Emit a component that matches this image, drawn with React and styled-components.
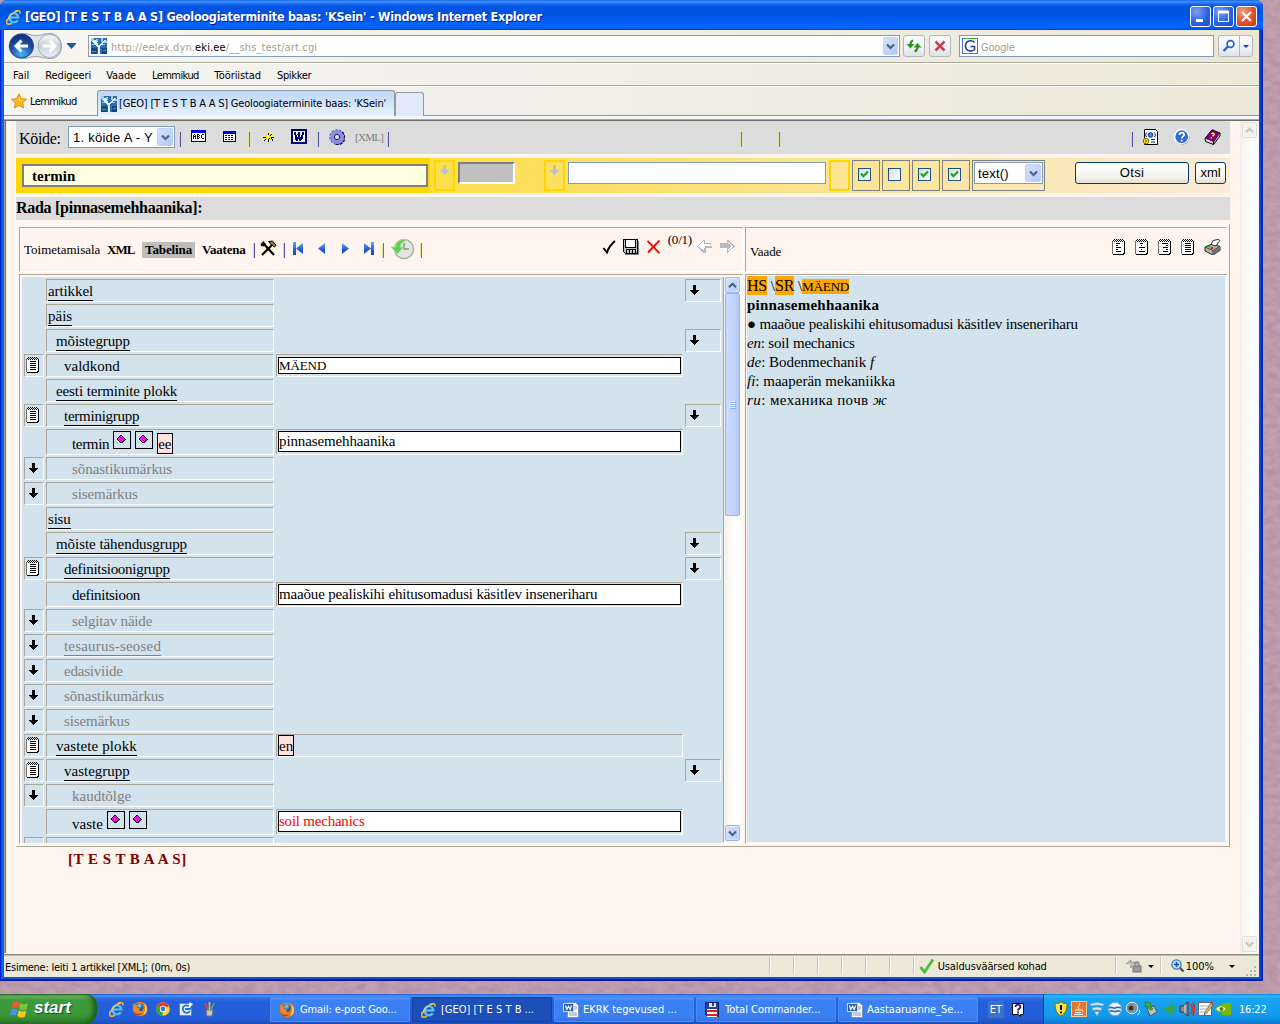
import React from "react";
import styled, { createGlobalStyle, css } from "styled-components";

const UI = '"DejaVu Sans Condensed", "DejaVu Sans", sans-serif';
const SERIF = '"Liberation Serif", serif';
const ARIAL = '"Liberation Sans", sans-serif';

const GlobalStyle = createGlobalStyle`
  * { box-sizing: border-box; }
  html, body { margin: 0; padding: 0; overflow: hidden; }
  svg { display: block; flex: none; }
`;

/* ---------- shared pieces ---------- */

const Desktop = styled.div`
  position: relative;
  width: 1280px;
  height: 1024px;
  overflow: hidden;
  background: #bb96a8;
  display: flex;
  flex-direction: column;
  justify-content: space-between;
`;
const Wallpaper = styled.svg`
  position: absolute;
  inset: 0;
`;
const Text = styled.span`
  white-space: pre;
  flex: none;
  font-size: ${(p) => p.$size || 11}px;
  letter-spacing: ${(p) => p.$ls || 0}px;
  font-weight: ${(p) => (p.$bold ? 700 : 400)};
  color: ${(p) => p.$color || "inherit"};
  margin-left: ${(p) => p.$ml || 0}px;
  margin-top: ${(p) => p.$mt || 0}px;
  text-shadow: ${(p) => p.$shadow || "none"};
`;
const Slot = styled.div`
  flex: none;
  display: flex;
  margin-left: ${(p) => p.$ml || 0}px;
  margin-top: ${(p) => p.$mt || 0}px;
`;
const Spacer = styled.div`
  flex: 1;
`;

function Pixels({ rows, colors }) {
  const w = Math.max(...rows.map((r) => r.length));
  const cells = [];
  rows.forEach((r, y) => {
    let x = 0;
    while (x < r.length) {
      const c = r[x];
      let n = 1;
      while (x + n < r.length && r[x + n] === c) n++;
      if (colors[c]) cells.push(<rect key={`${x}-${y}`} x={x} y={y} width={n} height="1" fill={colors[c]} />);
      x += n;
    }
  });
  return (
    <svg width={w} height={rows.length} shapeRendering="crispEdges">
      {cells}
    </svg>
  );
}

const DOWN = ["...kkk...", "...kkk...", "...kkk...", "...kkk...", "...kkk...", "kkkkkkkkk", ".kkkkkkk.", "..kkkkk..", "...kkk...", "....k...."];
const DownArrow = ({ color = "#000" }) => <Pixels rows={DOWN} colors={{ k: color }} />;

const noteBody = (line) => {
  const rows = ["..k.k.k.k.k..", ".k.k.k.k.k.k.", "gwkwkwkwkwkwk"];
  for (let i = 0; i < 11; i++) {
    rows.push("gww" + (i % 2 === 1 ? line[(i - 1) / 2] : "wwwwwww") + "wwk");
  }
  rows.push("gwwwwwwwwwwkk", ".kkkkkkkkkkk.");
  return rows;
};
const NOTE_LINES = {
  left: ["wkkkkww", "wkkwwww", "wkkkkkw", "wkkwwww", "wkkkkkw"],
  center: ["wwkkkww", "wwwkwww", "wkkkkkk", "wwwkwww", "wkkkkkk"],
  right: ["wkkkkkk", "wwwwwkk", "wwkkkkk", "wwwwwkk", "wwkkkkk"],
  full: ["wkkkkkk", "wkkkkkk", "wkkkkkk", "wkkkkkk", "wkkkkkk"],
};
const Note = ({ kind = "full" }) => <Pixels rows={noteBody(NOTE_LINES[kind])} colors={{ k: "#000", w: "#fff", g: "#707070" }} />;

const Diamond = () => (
  <Pixels
    rows={["...kk....", "..kmmk...", ".kmmmmk..", "kmmmmmmk.", "kmmmmmmmk", ".kmmmmkk.", "..kmmkk..", "...kkk..."]}
    colors={{ k: "#000", m: "#f0f" }}
  />
);

const Sep = styled.i`
  flex: none;
  width: 2px;
  height: 15px;
  margin-left: ${(p) => p.$ml || 0}px;
  margin-top: ${(p) => p.$mt || 0}px;
  background: ${(p) =>
    p.$tone === "gold"
      ? "linear-gradient(90deg, #e8e39a 50%, #7d7a3c 50%)"
      : "linear-gradient(90deg, #d9d5c6 50%, #5454a8 50%)"};
`;

const Chevron = ({ color = "#4d6185", up, size = 9 }) => (
  <svg width={size} height={size - 2} viewBox="0 0 9 7">
    <path d={up ? "M1 5.3 4.5 1.8 8 5.3" : "M1 1.5 4.5 5 8 1.5"} fill="none" stroke={color} strokeWidth="2.2" />
  </svg>
);

/* ---------- brand glyphs ---------- */

const IeLogo = ({ size = 16 }) => (
  <svg width={size} height={size} viewBox="0 0 16 16">
    <path d="M13.4 9.8H5.4c.2 2.600 3.400 3 4.500 1.100h3.200C11.200 16.300 2.400 15.300 2.300 8.800 2.300 1.600 13.300 1.300 13.500 8.600zM5.500 7.300h4.800C10 4.900 6 4.700 5.500 7.300z" fill="#62c0fa" stroke="#1a6cc0" strokeWidth=".5" />
    <path d="M13.800 4.500c.8-2.900-1.400-3.800-4.800-2M1.600 10.200c-2.500 5 .3 6.200 4.400 3.700" fill="none" stroke="#f2b321" strokeWidth="1.700" />
    <path d="M1.600 11C3 7 7 3 11.600 2" fill="none" stroke="#f6cf51" strokeWidth="1.300" />
  </svg>
);
const Firefox = () => (
  <svg width="16" height="16" viewBox="0 0 16 16">
    <circle cx="8" cy="8" r="7.300" fill="#ed7d14" />
    <circle cx="7.500" cy="6.200" r="4.200" fill="#2f5fae" />
    <circle cx="7.500" cy="4.500" r="2.200" fill="#67b7e6" />
    <path d="M.8 2 3.500 4.500l2-.7L5 6.500l3 1c-2 2-.5 3.200 1.500 2.500-2 3-8 2-8-4z" fill="#f08a1c" />
    <path d="M12 2c4.500 4 4 10-1 12 2.500-3.500 2.500-8 1-12z" fill="#ffd04a" />
    <path d="M1 10c2 3 6 4 9 2-1 3-7 4-9-2z" fill="#b8420c" />
  </svg>
);
const Chrome = () => (
  <svg width="16" height="16" viewBox="0 0 16 16">
    <circle cx="8" cy="8" r="6.800" fill="#ffd43a" />
    <path d="M8 8 2.200 4.800A6.800 6.800 0 0 1 14 5z" fill="#e33b2e" />
    <path d="M8 8 2.200 4.500A6.800 6.800 0 0 0 7.500 14.800z" fill="#35a148" />
    <circle cx="8" cy="8" r="3.2" fill="#fff" />
    <circle cx="8" cy="8" r="2.400" fill="#3b78d8" />
  </svg>
);
const WordDoc = () => (
  <svg width="16" height="16" viewBox="0 0 16 16">
    <path d="M4.500.500h8l3 3v12h-11z" fill="#fff" stroke="#7b92b8" />
    <path d="M11 5h3M11 7h3M6 11h8M6 13h8" stroke="#7d99cc" />
    <rect x=".5" y="1.500" width="10" height="8" fill="#2b5cb0" stroke="#c8d8f4" />
    <path d="M2.500 3.500l1.200 4L5.500 4.200 7.200 7.500 8.500 3.500" fill="none" stroke="#fff" strokeWidth="1.200" />
  </svg>
);
const Floppy = ({ red }) => (
  <svg width={red ? 14 : 16} height={red ? 15 : 16} viewBox={red ? "0 0 15 15" : "0 0 16 16"} shapeRendering="crispEdges">
    {!red && <path d="M2 15.500h13.500V2" stroke="#808080" fill="none" />}
    <path d="M.500.500h14v14h-12l-2-2z" fill={red ? "#24429a" : "#c0c0c0"} stroke={red ? "#0b1f5c" : "#000"} />
    {red ? (
      <>
        <rect x="4" y="0" width="8" height="5" fill="#dfe6f5" />
        <rect x="8" y="1" width="2" height="3" fill="#24429a" />
        <rect x="2" y="7" width="11" height="8" fill="#fff" />
        <path d="M2 9.500h11M2 13h11" stroke="#e02020" strokeWidth="2" />
      </>
    ) : (
      <>
        <rect x="2.500" y=".5" width="10" height="8" fill="#fff" stroke="#000" />
        <rect x="3.500" y="10.500" width="9" height="4" fill="#c0c0c0" stroke="#000" />
        <path d="M6.500 11v3M9.500 11v3" stroke="#000" />
      </>
    )}
  </svg>
);
const Tree = () => (
  <svg width="16" height="16" viewBox="0 0 16 16" shapeRendering="crispEdges">
    <rect width="16" height="16" fill="#2e6cae" />
    <path d="M0 0h3v3H0zM5 1h2v3H5zM10 0h2v4h-2zM13 3h3v2h-3zM1 6h5v1H1zM9 6h5v1H9zM3 3h2v3H3z" fill="#9dcbf0" />
    <path d="M2 3 8 9 14 2M8 16V8M4 2l3 6M11 5 9 8" stroke="#e4f4ff" strokeWidth="1.600" fill="none" />
    <path d="M0 10h6v6H0zM11 10h5v6h-5z" fill="#124a86" />
    <path d="M1 13h4M12 12h3" stroke="#4d8fcd" />
  </svg>
);

/* ---------- window chrome ---------- */

const Window = styled.div`
  position: relative;
  width: 1263px;
  height: 981px;
  padding: 0 4px 4px;
  border-radius: 7px 7px 0 0;
  overflow: hidden;
  background: linear-gradient(90deg, #0019cf 0, #0831d9 1px, #166aee 2px, #0855dd 4px, #0855dd 1259px, #0048f0 1260px, #003dda 1261px, #00138c 1263px);
  box-shadow: inset 0 -1px #00138c, inset 0 -2px #001ea0;
  font-family: ${UI};
  font-size: 11px;
  color: #000;
`;
const TitleBar = styled.div`
  height: 30px;
  margin: 0 -4px;
  padding: 3px 6px 0 6px;
  display: flex;
  align-items: center;
  color: #fff;
  background: linear-gradient(#0a4fd8 0, #3c93ff 1px, #2a7df5 3px, #0a5ce8 5px, #0054e3 8px, #0054e3 15px, #005df5 20px, #0066ff 26px, #0060f5 28px, #003dd7 30px);
`;
const Caption = styled.button`
  width: 21px;
  height: 21px;
  padding: 0;
  margin-left: 2px;
  border: 1px solid #fff;
  border-radius: 3px;
  display: grid;
  place-items: center;
  background: ${(p) => (p.$close ? "radial-gradient(circle at 30% 25%, #f0a080, #e0512a 55%, #c03a12)" : "radial-gradient(circle at 30% 25%, #7ba2f8, #2e63e6 55%, #1a4bd0)")};
`;
const AddressBar = styled.div`
  height: 33px;
  padding-left: 4px;
  display: flex;
  align-items: center;
  background: linear-gradient(90deg, #f6f5f1, #f0efe6 60%, #ebe7d4);
  border-bottom: 1px solid #aca899;
`;
const UrlBox = styled.div`
  width: ${(p) => p.$w}px;
  height: 22px;
  margin-left: ${(p) => p.$ml}px;
  padding: 1px 1px 1px 2px;
  border: 1px solid #7f9db9;
  background: #fff;
  display: flex;
  align-items: center;
  color: #a39f90;
`;
const DropButton = styled.div`
  width: ${(p) => p.$w || 15}px;
  align-self: stretch;
  border-radius: 2px;
  display: grid;
  place-items: center;
  background: linear-gradient(135deg, #d6e2fd, #b4c8f6);
  border: 1px solid #c2d2f5;
`;
const ToolButton = styled.div`
  width: ${(p) => p.$w}px;
  height: 22px;
  margin-left: ${(p) => p.$ml}px;
  border: 1px solid #b5b6b8;
  border-radius: ${(p) => p.$r || "3px"};
  background: linear-gradient(#fdfdfd, #eef0f6 60%, #dfe3ee);
  display: grid;
  place-items: center;
`;
const MenuBar = styled.div`
  height: 23px;
  display: flex;
  align-items: center;
  padding: 2px 0 0 9px;
  background: linear-gradient(90deg, #f5f5f2, #efede2 60%, #ece9d8);
  border-top: 1px solid #fff;
  border-bottom: 1px solid #aca899;
`;
const TabBar = styled.div`
  height: 30px;
  display: flex;
  padding-left: 7px;
  border-top: 1px solid #fff;
  border-bottom: 1px solid #8e9aa9;
  background: linear-gradient(90deg, #f5f5f2, #efede2 60%, #ece9d8);
`;
const Favourites = styled.div`
  width: 86px;
  display: flex;
  align-items: center;
`;
const Tab = styled.div`
  width: ${(p) => p.$w}px;
  height: ${(p) => p.$h}px;
  align-self: flex-end;
  margin-right: 0;
  margin-bottom: -1px;
  padding-left: 3px;
  display: flex;
  align-items: center;
  border: 1px solid #919b9c;
  border-bottom: 0;
  border-radius: 3px 3px 0 0;
  background: ${(p) => (p.$blank ? "#e0eafa" : "linear-gradient(#bdd7fb, #eaf2fd)")};
`;
const PageTop = styled.div`
  height: 5px;
  background: linear-gradient(#f3f7fd 3px, #aca899 3px, #aca899 4px, #716f64 4px);
`;

/* ---------- page ---------- */

const Page = styled.div`
  height: 832px;
  display: flex;
  border-left: 1px solid #aca899;
  box-shadow: inset 1px 0 #716f64;
  background: #fff4ee;
  font-family: ${SERIF};
  padding-left: 11px;
  padding-right: 2px;
`;
const PageBody = styled.div`
  width: 1214px;
  display: flex;
  flex-direction: column;
`;
const ScrollBar = styled.div`
  width: ${(p) => p.$w}px;
  margin-left: ${(p) => p.$ml || 0}px;
  display: flex;
  flex-direction: column;
  background: linear-gradient(90deg, #f3f1ec, #fefefb 60%);
  border-left: 1px solid ${(p) => p.$edge || "#eeede5"};
  padding: ${(p) => (p.$edge ? 0 : 1)}px ${(p) => (p.$edge ? 1 : 0)}px 1px 1px;
`;
const ScrollButton = styled.div`
  height: 16px;
  border-radius: 2px;
  display: grid;
  place-items: center;
  border: 1px solid ${(p) => (p.$off ? "#e2e0d6" : "#9db6ee")};
  background: ${(p) => (p.$off ? "#f2f1ea" : "linear-gradient(135deg, #d4e1fe, #b6cbfa)")};
  box-shadow: inset 0 0 0 1px #fff6;
`;
const Thumb = styled.div`
  height: 223px;
  border-radius: 2px;
  border: 1px solid #98b3ea;
  display: grid;
  place-items: center;
  background: linear-gradient(90deg, #cbdafe, #c3d3fd 60%, #b4c8f8);
`;

const TopBar = styled.div`
  height: 33px;
  background: #dcdcdc;
  display: flex;
  align-items: flex-start;
  padding-left: 3px;
`;
const Label = styled.div`
  width: 42px;
  margin-top: 9px;
  font-size: 16px;
  letter-spacing: -0.3px;
  white-space: nowrap;
`;
const Select = styled.div`
  width: ${(p) => p.$w}px;
  height: 22px;
  margin-left: ${(p) => p.$ml || 0}px;
  margin-top: ${(p) => p.$mt || 0}px;
  padding: 1px 1px 1px 4px;
  display: flex;
  align-items: center;
  justify-content: space-between;
  border: 1px solid #7f9db9;
  background: #fff;
  font-family: ${ARIAL};
`;
const SearchBar = styled.div`
  height: 35px;
  margin-top: 4px;
  display: flex;
  padding-top: 2px;
  background: linear-gradient(90deg, #ffd700, #faebd7);
`;
const TermCell = styled.div`
  width: 414px;
  height: 35px;
  margin-top: -2px;
  padding: 6px 2px 0 6px;
  background: #ffd700;
`;
const TermBox = styled.div`
  height: 23px;
  width: 406px;
  border: 2px solid #808080;
  background: #ffffe0;
  display: flex;
  align-items: center;
  padding: 2px 0 0 8px;
`;
const GoldCell = styled.div`
  width: 21px;
  height: 31px;
  margin-left: ${(p) => p.$ml}px;
  border: 2px solid #ffd700;
  display: flex;
  justify-content: center;
  padding-top: 3px;
`;
const GreyButton = styled.div`
  width: 57px;
  height: 22px;
  margin: 2px 0 0 3px;
  background: #c0c0c0;
  border: 2px solid;
  border-color: #808080 #fff #fff #808080;
`;
const SearchInput = styled.div`
  width: 258px;
  height: 22px;
  margin: 2px 0 0 3px;
  background: #fff;
  border: 1px solid #7f9db9;
`;
const CheckCell = styled.div`
  width: ${(p) => p.$w || 28}px;
  height: 31px;
  margin-left: 2px;
  border: 1px solid #808080;
  padding: ${(p) => p.$pad || "7px 0 0 5px"};
`;
const CheckBox = styled.div`
  width: 13px;
  height: 13px;
  border: 1px solid #1c5180;
  background: linear-gradient(135deg, #dcdcd7, #fff);
`;
const PushButton = styled.div`
  width: ${(p) => p.$w}px;
  height: 22px;
  margin: 2px 0 0 ${(p) => p.$ml}px;
  padding-bottom: 2px;
  border: 1px solid #003c74;
  border-radius: 3px;
  background: linear-gradient(#fff, #f3f3ee 70%, #e2dfd2);
  display: flex;
  align-items: center;
  justify-content: center;
  font-family: ${ARIAL};
`;
const PathBar = styled.div`
  height: 23px;
  margin-top: 4px;
  background: #dcdcdc;
  display: flex;
  align-items: center;
`;
const Frame = styled.div`
  width: 1214px;
  height: 623px;
  margin-top: 4px;
  padding: 2px;
  display: grid;
  grid-template-columns: 724px 482px;
  grid-template-rows: 45px 570px;
  gap: 2px;
  border: 1px solid;
  border-color: #fff #aca899 #aca899 #fff;
`;
const inset = css`
  border: 1px solid;
  border-color: #aca899 #fff #fff #aca899;
`;
const HeadCell = styled.div`
  ${inset}
  display: flex;
  padding-left: 4px;
`;
const Pane = styled.div`
  ${inset}
  display: flex;
  padding: ${(p) => p.$pad};
  overflow: hidden;
`;
const Mode = styled.span`
  flex: none;
  width: ${(p) => p.$w}px;
  margin-top: 14px;
  margin-left: ${(p) => p.$ml}px;
  padding: 0 ${(p) => (p.$active ? 3 : 0)}px;
  height: 16px;
  line-height: 16px;
  font-size: 13px;
  white-space: nowrap;
  font-weight: ${(p) => (p.$plain ? 400 : 700)};
  letter-spacing: ${(p) => p.$ls || 0}px;
  background: ${(p) => (p.$active ? "#bebebe" : "transparent")};
`;
const TreeArea = styled.div`
  width: 701px;
  height: 566px;
  padding: 2px 2px 0;
  overflow: hidden;
  background: #d2e3ee;
  display: flex;
  flex-direction: column;
  gap: 2px;
`;
const Row = styled.div`
  flex: none;
  height: ${(p) => p.$h}px;
  display: grid;
  grid-template-columns: 20px 228px 407px 36px;
  column-gap: 2px;
`;
const Cell = styled.div`
  min-width: 0;
  ${(p) => p.$on && inset}
  display: flex;
  align-items: ${(p) => (p.$top ? "flex-start" : "center")};
  padding-left: ${(p) => p.$pl || 0}px;
  padding-top: ${(p) => p.$top || 0}px;
`;
const Name = styled.span`
  font-size: 15px;
  line-height: 17px;
  white-space: pre;
  letter-spacing: ${(p) => p.$ls || 0}px;
  color: ${(p) => (p.$dim ? "#808080" : "#000")};
  border-bottom: ${(p) => (p.$link ? `1px solid ${p.$dim ? "#808080" : "#000"}` : "0")};
  margin-top: ${(p) => p.$mt || 0}px;
`;
const Mini = styled.span`
  width: 18px;
  height: 18px;
  margin: 1px 0 0 4px;
  padding: 3px 0 0 3px;
  align-self: flex-start;
  border: 1px solid #000;
`;
const Lang = styled.span`
  height: 21px;
  width: 16px;
  margin: ${(p) => p.$m || 0};
  line-height: 20px;
  font-size: 15px;
  border: 1px solid #000;
  background: #ffe4e1;
`;
const Value = styled.div`
  width: 403px;
  height: ${(p) => p.$h}px;
  line-height: ${(p) => p.$h - 2}px;
  border: 1px solid #000;
  background: #fff;
  font-size: ${(p) => p.$size || 15}px;
  letter-spacing: ${(p) => p.$ls || 0}px;
  color: ${(p) => p.$color || "#000"};
  white-space: pre;
`;
const View = styled.div`
  width: 478px;
  height: 566px;
  background: #d2e3ee;
  font-size: 15px;
  line-height: 19px;
`;
const Line = styled.div`
  height: ${(p) => p.$h || 19}px;
  white-space: pre;
  letter-spacing: ${(p) => p.$ls || 0}px;
  font-weight: ${(p) => (p.$bold ? 700 : 400)};
`;
const Mark = styled.span`
  display: inline-block;
  line-height: ${(p) => (p.$small ? 15 : 19)}px;
  font-size: ${(p) => (p.$small ? 13.3 : 16)}px;
  letter-spacing: ${(p) => (p.$small ? -0.4 : -0.2)}px;
  background: #ffa500;
`;

const StatusBar = styled.div`
  height: 24px;
  padding: 0 2px 0 1px;
  display: flex;
  align-items: center;
  border-top: 1px solid #fff;
  box-shadow: inset 0 1px #85837a, inset 0 2px #c5c2b3;
  background: #ece9d8;
`;
const StatusSep = styled.i`
  width: 2px;
  height: 17px;
  margin-left: ${(p) => p.$ml}px;
  background: linear-gradient(90deg, #c9c6b8 50%, #fff 50%);
`;
const StatusGroup = styled.div`
  width: ${(p) => p.$w}px;
  display: flex;
  align-items: center;
`;

/* ---------- taskbar ---------- */

const TaskBar = styled.div`
  position: relative;
  height: 30px;
  display: flex;
  font-family: ${UI};
  font-size: 11px;
  color: #fff;
  background: linear-gradient(#1f5ad0 0, #4b93f5 2px, #2f6fe8 4px, #245edb 8px, #245edb 24px, #1d4db8 30px);
`;
const Start = styled.div`
  width: 97px;
  padding-left: 10px;
  display: flex;
  align-items: center;
  border-radius: 0 10px 12px 0;
  background: linear-gradient(#2e7a2c 0, #6fbd6c 2px, #3f9a3d 6px, #3a9838 20px, #2c7a2a 30px);
  box-shadow: inset -4px 0 5px #1e5c1e;
`;
const StartText = styled.span`
  margin-left: 5px;
  margin-top: -2px;
  font: italic 700 17px "Liberation Sans", sans-serif;
  text-shadow: 1px 1px 1px #1c4a1c;
`;
const Quick = styled.div`
  width: 173px;
  padding-left: 12px;
  display: flex;
  align-items: center;
  gap: 7px;
`;
const Task = styled.div`
  width: 140px;
  height: 25px;
  margin: 3px 2px 0 0;
  padding-left: 9px;
  display: flex;
  align-items: center;
  border-radius: 2px;
  background: ${(p) => (p.$active ? "#1d4fb8" : "linear-gradient(#5a9bff, #3a80f4 4px, #3b7ff2 20px, #3272e0)")};
  box-shadow: inset 0 0 0 1px ${(p) => (p.$active ? "#1842a0" : "#4a8cf8")};
`;
const InputLanguage = styled.div`
  width: 16px;
  height: 17px;
  background: #3f6fc4;
  display: grid;
  place-items: center;
`;
const Tray = styled.div`
  width: 237px;
  padding-left: 9px;
  display: flex;
  align-items: center;
  gap: 2px;
  border-left: 1px solid #0b3f9c;
  background: linear-gradient(#0e86dc 0, #2cb8fa 2px, #18a4f0 5px, #129aec 22px, #0f78cc 30px);
`;

/* ---------- data ---------- */

const ROWS = [
  { n: "artikkel", d: 0, link: 1, add: 1, ls: -0.1 },
  { n: "päis", d: 0, link: 1 },
  { n: "mõistegrupp", d: 1, link: 1, add: 1, ls: -0.1 },
  { n: "valdkond", d: 2, note: 1, v: "MÄEND", vh: 17, vs: 13, vl: -0.1 },
  { n: "eesti terminite plokk", d: 1, link: 1, ls: -0.1 },
  { n: "terminigrupp", d: 2, link: 1, note: 1, add: 1, ls: -0.25 },
  { n: "termin", d: 3, h: 26, mini: 1, lang: "ee", v: "pinnasemehhaanika", vl: -0.12, ls: -0.33 },
  { n: "sõnastikumärkus", d: 3, dim: 1, arrow: 1, ls: -0.05 },
  { n: "sisemärkus", d: 3, dim: 1, arrow: 1, ls: -0.1 },
  { n: "sisu", d: 0, link: 1, ls: -0.2 },
  { n: "mõiste tähendusgrupp", d: 1, link: 1, add: 1, ls: -0.05 },
  { n: "definitsioonigrupp", d: 2, link: 1, note: 1, add: 1, ls: -0.28 },
  { n: "definitsioon", d: 3, h: 25, v: "maaõue pealiskihi ehitusomadusi käsitlev inseneriharu", vl: -0.17, ls: -0.3 },
  { n: "selgitav näide", d: 3, dim: 1, arrow: 1, ls: -0.2 },
  { n: "tesaurus-seosed", d: 2, dim: 1, link: 1, arrow: 1, ls: 0.2 },
  { n: "edasiviide", d: 2, dim: 1, arrow: 1, ls: -0.2 },
  { n: "sõnastikumärkus", d: 2, dim: 1, arrow: 1, ls: -0.05 },
  { n: "sisemärkus", d: 2, dim: 1, arrow: 1, ls: -0.1 },
  { n: "vastete plokk", d: 1, link: 1, note: 1, tag: "en", ls: 0.1 },
  { n: "vastegrupp", d: 2, link: 1, note: 1, add: 1 },
  { n: "kaudtõlge", d: 3, dim: 1, arrow: 1 },
  { n: "vaste", d: 3, h: 26, mini: 1, v: "soil mechanics", vl: -0.22, color: "#f00" },
  { n: "", d: 3, arrow: 1, hidden: 1 },
];

function TreeRow({ r }) {
  return (
    <Row $h={r.h || 23}>
      <Cell $on={r.note || r.arrow} $pl={r.note ? 1 : 4} $top={r.note ? 2 : 5}>
        {r.note && <Note />}
        {r.arrow && !r.hidden && <DownArrow />}
      </Cell>
      <Cell $on $pl={1 + r.d * 8}>
        <Name $link={r.link} $dim={r.dim} $ls={r.ls} $mt={r.mini ? 4 : r.link ? 3 : 2}>{r.n}</Name>
        {r.mini && <><Mini><Diamond /></Mini><Mini><Diamond /></Mini></>}
        {r.lang && <Lang $m="3px 0 0 4px">{r.lang}</Lang>}
      </Cell>
      <Cell $on={r.v || r.tag} $pl={1} $top={r.h === 26 ? 1 : 0}>
        {r.v && <Value $h={r.vh || 21} $size={r.vs} $ls={r.vl} $color={r.color}>{r.v}</Value>}
        {r.tag && <Lang>{r.tag}</Lang>}
      </Cell>
      <Cell $on={r.add} $pl={4} $top={5}>{r.add && <DownArrow />}</Cell>
    </Row>
  );
}

const Tick = () => (
  <svg width="11" height="11" viewBox="0 0 11 11">
    <path d="M2 4.600 4.300 7.200 9 2.400" fill="none" stroke="#21a121" strokeWidth="2.200" />
  </svg>
);
const NavIcon = ({ kind }) => {
  const w = kind.length > 4 ? 10 : 8;
  return (
    <svg width={w} height="13" viewBox={`0 0 ${w} 13`}>
      <defs>
        <linearGradient id={`nav-${kind}`} x2="0" y2="1"><stop offset="0" stopColor="#6fa4f4" /><stop offset=".6" stopColor="#1f5bd8" /><stop offset="1" stopColor="#1446b4" /></linearGradient>
      </defs>
      {kind === "first" && <path d="M0 0h3v13H0zM10 1v11L3 6.500z" fill={`url(#nav-${kind})`} />}
      {kind === "prev" && <path d="M7 1v11L0 6.500z" fill={`url(#nav-${kind})`} />}
      {kind === "next" && <path d="M1 1v11l7-5.500z" fill={`url(#nav-${kind})`} />}
      {kind === "final" && <path d="M7 0h3v13H7zM0 1v11l7-5.500z" fill={`url(#nav-${kind})`} />}
    </svg>
  );
};
const GREY_LEFT = [
  "......gg.......", ".....gwg.......", "....gwwg.......", "...gwwwggggggg.", "..gwwwwwwwwwwg.", ".gwwwwwwwwwwww.", "gwwwwwwwggggggg", ".ggwwwwwggggggg", "..ggwwwgg......", "...gggwgg......", "....ggggg......", ".....gggg......", "......ggg......",
];
const GREY_RIGHT = [
  ".......gg......", ".......ggg.....", ".......gwgg....", "gggggggggwgg...", "ggggggggggwgg..", "gggggggggggwgg.", "gggggggggggwwgg", "ggggggggggwwgg.", ".wwwwwwggwwgw..", ".......gwwgw...", ".......gwgw....", ".......ggw.....", ".......gw......",
];
const greys = { g: "#b9b9b9", w: "#fff" };

const WORD = [
  "bbbbbbbbbbbbbbbb", "bbbbbbbbbbbbbbbb", "bbwwwwwwwwwwwwbb", "bbwbbwwbbwwbbwbb", "bbwbbwwbbwwbbwbb", "bbwbbwbbbwwbbwbb", "bbwwbbwbbwbbwwbb",
  "bbwwbbwbbwbbwwbb", "bbwwbbbbbbbbwwbb", "bbwwbbbbbbbbwwbb", "bbwwbbbwbbbwwwbb", "bbwwwbbwbbwwwwbb", "bbwwwwwwwwwwwwbb", "bbbbbbbbbbbbbbbb", "bbbbbbbbbbbbbbbb",
];
const ABC = [
  "bbbbbbbbbbbbbbb", "bbbbbbbbbbbbbbb", "bbbbbbbbbbbbbbb", "kwwwwwwwwwwwwwk", "kwwkwwkkwwwkkwk", "kwkwkwkwkwkwwwk", "kwkkkwkkwwkwwwk", "kwkwkwkwkwkwwwk", "kwkwkwkkwwwkkwk", "kwwwwwwwwwwwwwk", "kwwwwwwwwwwwwwk", "kkkkkkkkkkkkkkk",
];
const LIST = [
  "bbbbbbbbbbbbb", "bbbbbbbbbbbbb", "bbbbbbbbbbbbb", "kwwwwwwwwwwwk", "kwkkwkkwkkwwk", "kwwwwwwwwwwwk", "kwkkwkkwkkwwk", "kwwwwwwwwwwwk", "kwkkwkkwkkwwk", "kwwwwwwwwwwwk", "kkkkkkkkkkkkk",
];
const STAR = [".....y.....", ".y..yky....", "..y.yk.yk..", "...yyyyk...", "yyyywwyyyyy", "kkkyyyyykkk", "..yyyykyk..", ".yk.yk..yk.", ".k..yk...k.", ".....k....."];
const pal = { b: "#0000f0", k: "#000", w: "#fff", y: "#ffee00" };

export default function App() {
  return (
    <Desktop>
      <GlobalStyle />
      <Wallpaper width="1280" height="1024">
        <filter id="stone" x="0" y="0" width="100%" height="100%">
          <feTurbulence type="fractalNoise" baseFrequency="0.09 0.16" numOctaves="5" seed="8" />
          <feColorMatrix values="0 0 0 0 .38  0 0 0 0 .24  0 0 0 0 .32  .9 .6 0 0 -.5" />
        </filter>
        <rect width="1280" height="1024" fill="#c2a1b0" />
        <rect width="1280" height="1024" filter="url(#stone)" />
      </Wallpaper>

      <Window>
        <TitleBar>
          <IeLogo />
          <Text $size={12.5} $bold $ml={3} $ls={-0.25} $shadow="1px 1px 0 #0a1f8f">[GEO] [T E S T B A A S] Geoloogiaterminite baas: 'KSein' - Windows Internet Explorer</Text>
          <Spacer />
          <Caption><svg width="13" height="13"><rect x="2" y="9" width="7" height="3" fill="#fff" /></svg></Caption>
          <Caption><svg width="13" height="13"><path d="M1.500 2v9.500h10V2z" fill="none" stroke="#fff" /><path d="M1 2h11" stroke="#fff" strokeWidth="3" /></svg></Caption>
          <Caption $close><svg width="13" height="13"><path d="M2 2l9 9M11 2l-9 9" stroke="#fff" strokeWidth="2.200" /></svg></Caption>
        </TitleBar>

        <AddressBar>
          <svg width="56" height="28" viewBox="0 0 56 28">
            <defs>
              <radialGradient id="back" cx=".5" cy=".85" r=".8"><stop offset="0" stopColor="#47b5f5" /><stop offset=".6" stopColor="#1b4fa8" /><stop offset="1" stopColor="#0f2f7c" /></radialGradient>
              <linearGradient id="fwd" x2="0" y2="1"><stop offset="0" stopColor="#fafbfc" /><stop offset=".5" stopColor="#c9d0da" /><stop offset="1" stopColor="#eef2f7" /></linearGradient>
            </defs>
            <path d="M13.500 1.500C20 1 22 3.500 28 3.500S38 1 43 1.500c14 2 14 24 0 25-5 .5-9-2-15-2s-9 2.500-14.500 2C-3 25-3 3 13.500 1.500z" fill="#dfe3ea" stroke="#9aa3b0" />
            <circle cx="13.500" cy="14" r="12" fill="url(#back)" stroke="#28468c" />
            <circle cx="41.500" cy="14" r="11.500" fill="url(#fwd)" stroke="#a5adb8" />
            <path d="M20 14H8.500M13.500 8.500 8 14l5.500 5.500" fill="none" stroke="#fff" strokeWidth="3" />
            <path d="M34.500 14H47M41.500 8.500 47 14l-5.500 5.500" fill="none" stroke="#fff" strokeWidth="3" />
          </svg>
          <Slot $ml={3}><svg width="9" height="6"><path d="M0 0h9v1L4.500 6 0 1z" fill="#1d5a98" /></svg></Slot>
          <UrlBox $w={812} $ml={12}>
            <Tree />
            <Text $ml={4} $mt={2} $ls={0.14}>http://eelex.dyn.<Text $color="#000" $ls={0.14}>eki.ee</Text>/__shs_test/art.cgi</Text>
            <Spacer />
            <DropButton><Chevron /></DropButton>
          </UrlBox>
          <ToolButton $w={22} $ml={3}>
            <svg width="16" height="16"><path d="M7 2.500C5 3 4.500 4.500 4.500 7M8.500 13.500c2-.5 3-2 3-4.500" fill="none" stroke="#2e9423" strokeWidth="2.200" /><path d="M.500 6h8L4.500 10.500zM7.500 9.500h8l-4-4.500z" fill="#2e9423" /></svg>
          </ToolButton>
          <ToolButton $w={22} $ml={4}>
            <svg width="12" height="12"><path d="M1.500 1.500l9 9M10.500 1.500 1.500 10.500" stroke="#c8414a" strokeWidth="2.500" /></svg>
          </ToolButton>
          <UrlBox $w={255} $ml={8}>
            <svg width="16" height="16"><rect x=".5" y=".5" width="15" height="15" fill="#fff" stroke="#3aa63a" /><path d="M.500 0v16" stroke="#3b6fd8" /><path d="M15.500 2v14" stroke="#d33" /><path d="M12.500 4.500C10 1.500 3.500 2.500 3.500 8s6.500 6 9 3.500V8.500H8.500" fill="none" stroke="#26399c" strokeWidth="1.600" /></svg>
            <Text $ml={3} $mt={2} $ls={-0.2}>Google</Text>
          </UrlBox>
          <ToolButton $w={22} $ml={4} $r="3px 0 0 3px">
            <svg width="14" height="14"><circle cx="8.500" cy="5" r="3.400" fill="#fff" stroke="#2a62d8" strokeWidth="1.800" /><path d="M6 7.500 1.500 12" stroke="#2a62d8" strokeWidth="2.400" /></svg>
          </ToolButton>
          <ToolButton $w={14} $ml={-1} $r="0 3px 3px 0"><svg width="6" height="3"><path d="M0 0h6L3 3z" fill="#0b47c0" /></svg></ToolButton>
        </AddressBar>

        <MenuBar>
          <Text>Fail</Text>
          <Text $ml={16} $ls={-0.1}>Redigeeri</Text>
          <Text $ml={15} $ls={-0.1}>Vaade</Text>
          <Text $ml={16} $ls={-0.58}>Lemmikud</Text>
          <Text $ml={15.500} $ls={-0.1}>Tööriistad</Text>
          <Text $ml={16} $ls={-0.35}>Spikker</Text>
        </MenuBar>

        <TabBar>
          <Favourites>
            <svg width="16" height="16" viewBox="0 0 16 16"><path d="M8 .8 10.200 5.700 15.500 6.200 11.500 9.800 12.700 15 8 12.300 3.300 15 4.500 9.800.500 6.200 5.800 5.700z" fill="#ffb91f" stroke="#d98a08" /><path d="M8 3 9 6.500 12 7 8 8z" fill="#ffe89a" /></svg>
            <Text $ml={3} $ls={-0.58}>Lemmikud</Text>
          </Favourites>
          <Tab $w={298} $h={26}>
            <Tree />
            <Text $ml={2} $ls={-0.2}>[GEO] [T E S T B A A S] Geoloogiaterminite baas: 'KSein'</Text>
          </Tab>
          <Tab $w={29} $h={24} $blank />
        </TabBar>
        <PageTop />

        <Page>
          <PageBody>
            <TopBar>
              <Label>Köide:</Label>
              <Select $w={107} $ml={7} $mt={5}>
                <Text $size={13} $ls={0.25}>1. köide A - Y</Text>
                <DropButton $w={16}><Chevron /></DropButton>
              </Select>
              <Sep $ml={4} $mt={11} />
              <Slot $ml={10} $mt={9}><Pixels rows={ABC} colors={pal} /></Slot>
              <Slot $ml={17} $mt={10}><Pixels rows={LIST} colors={pal} /></Slot>
              <Sep $ml={12} $mt={11} $tone="gold" />
              <Slot $ml={13} $mt={11}><Pixels rows={STAR} colors={pal} /></Slot>
              <Slot $ml={17} $mt={8}><Pixels rows={WORD} colors={{ b: "#000070", w: "#fff" }} /></Slot>
              <Sep $ml={10} $mt={11} />
              <Slot $ml={10} $mt={8}>
                <svg width="16" height="16"><circle cx="8" cy="8" r="5" fill="none" stroke="#8c8ce8" strokeWidth="4" /><circle cx="8" cy="8" r="7.200" fill="none" stroke="#6a6ac0" strokeWidth="1.200" strokeDasharray="2.500 1.500" /><path d="M13 3a7 7 0 0 1-7 12" fill="none" stroke="#101040" strokeWidth="1.300" strokeDasharray="3 1" /><circle cx="8" cy="8" r="2.700" fill="#dcdcdc" stroke="#202050" /></svg>
              </Slot>
              <Text $size={11} $color="#808080" $ml={10} $mt={10} $ls={-0.7}>[XML]</Text>
              <Sep $ml={4} $mt={11} />
              <Sep $ml={351} $mt={11} $tone="gold" />
              <Sep $ml={36} $mt={11} $tone="gold" />
              <Sep $ml={351} $mt={11} />
              <Slot $ml={9} $mt={8}>
                <svg width="17" height="16"><path d="M2.500.500h11l2 2v13h-13z" fill="#fff" stroke="#000" /><circle cx="8.500" cy="6" r="2.300" fill="#28a0c8" stroke="#1020a0" /><path d="M4.500 3.500l-1 2.500 1 2M12.500 3.500l1 2.500-1 2M9 10.500h4M9 13h4" stroke="#1020a0" fill="none" /><circle cx="4" cy="12" r="2.800" fill="#fff200" stroke="#6d6400" /><circle cx="4" cy="12" r=".8" /></svg>
              </Slot>
              <Slot $ml={15} $mt={8}>
                <svg width="16" height="16"><circle cx="8.500" cy="8.500" r="7" fill="#778888" /><circle cx="7.700" cy="7.700" r="7" fill="#2d6ad6" stroke="#fff" strokeWidth="1.300" /><path d="M5.500 6c0-3 4.700-3 4.700-.3C10.200 7.500 7.800 7.300 7.800 9.500M7.800 10.800v1.700" stroke="#fff" strokeWidth="1.700" fill="none" /></svg>
              </Slot>
              <Slot $ml={14} $mt={8}>
                <svg width="17" height="16"><path d="M8 .700 16 4 9.500 13 1 9.500z" fill="#800080" stroke="#200020" /><path d="M1 9.500 1.500 12.500 9.500 15.500V13M9.500 15.500 16 7V4" fill="#ddd" stroke="#000" /><path d="M7.500 5c1-1.500 3.500-.5 2.500 1L8.500 7.200M7.500 8.500 7 9.500" stroke="#ff0" strokeWidth="1.500" fill="none" /></svg>
              </Slot>
            </TopBar>

            <SearchBar>
              <TermCell><TermBox><Text $size={15} $bold>termin</Text></TermBox></TermCell>
              <GoldCell $ml={4}><DownArrow color="#c0c0c0" /></GoldCell>
              <GreyButton />
              <GoldCell $ml={29}><DownArrow color="#c0c0c0" /></GoldCell>
              <SearchInput />
              <GoldCell $ml={3} />
              <CheckCell><CheckBox><Tick /></CheckBox></CheckCell>
              <CheckCell><CheckBox /></CheckCell>
              <CheckCell><CheckBox><Tick /></CheckBox></CheckCell>
              <CheckCell><CheckBox><Tick /></CheckBox></CheckCell>
              <CheckCell $w={73} $pad="1px">
                <Select $w={69}>
                  <Text $size={13} $ml={-1} $ls={0.2}>text()</Text>
                  <DropButton $w={16}><Chevron /></DropButton>
                </Select>
              </CheckCell>
              <PushButton $w={114} $ml={30}><Text $size={13} $ls={0.3}>Otsi</Text></PushButton>
              <PushButton $w={31} $ml={6}><Text $size={13}>xml</Text></PushButton>
            </SearchBar>

            <PathBar><Text $size={16} $bold $mt={-2} $ls={-0.28}>Rada [pinnasemehhaanika]:</Text></PathBar>

            <Frame>
              <HeadCell>
                <Mode $plain $w={76}>Toimetamisala</Mode>
                <Mode $ml={7} $w={28} $ls={-1}>XML</Mode>
                <Mode $ml={7} $w={53} $active $ls={-0.1}>Tabelina</Mode>
                <Mode $ml={7} $w={43} $ls={-0.2}>Vaatena</Mode>
                <Sep $ml={8} $mt={15} />
                <Slot $ml={5} $mt={12}>
                  <svg width="17" height="17"><path d="M2 15 13 4M3 3l11 12" stroke="#000" strokeWidth="2.200" /><path d="M8.500 1.500l4-.5 3.500 4-1.500 2L11 4.500z" fill="#8a7a2a" stroke="#000" /><path d="M1 5 4 1.500M1 5l2.500.500L5.500 3.500" stroke="#000" strokeWidth="1.800" fill="none" /></svg>
                </Slot>
                <Sep $ml={6} $mt={15} />
                <Slot $ml={8} $mt={14}><NavIcon kind="first" /></Slot>
                <Slot $ml={15} $mt={14}><NavIcon kind="prev" /></Slot>
                <Slot $ml={15} $mt={14}><NavIcon kind="next" /></Slot>
                <Slot $ml={15} $mt={14}><NavIcon kind="final" /></Slot>
                <Sep $ml={8} $mt={15} $tone="gold" />
                <Slot $ml={7} $mt={10}>
                  <svg width="24" height="22"><circle cx="13" cy="11" r="9.500" fill="#e3e7e2" stroke="#a9b0aa" strokeWidth="1.500" /><path d="M13 5v6h5" stroke="#8b958d" strokeWidth="1.500" fill="none" /><path d="M17 2C11 0 5 3 4.500 9H0l6.500 7 6-7H9c0-3 3-6 8-7z" fill="#5fd04c" stroke="#a8e69c" /></svg>
                </Slot>
                <Sep $ml={5} $mt={15} $tone="gold" />
                <Spacer />
                <Slot $mt={12}><svg width="14" height="14"><path d="M1.500 8l3.500 4.500C6 9 9.500 4 13 1" fill="none" stroke="#000" strokeWidth="2" /></svg></Slot>
                <Slot $ml={7} $mt={11}><Floppy /></Slot>
                <Slot $ml={8} $mt={12}><svg width="13" height="14"><path d="M.500 1l12 12M12.500.500 1 12.500" stroke="#f00" strokeWidth="1.900" /></svg></Slot>
                <Text $size={13} $ml={8} $mt={4} $ls={-0.2}>(0/1)</Text>
                <Slot $ml={5} $mt={12}><Pixels rows={GREY_LEFT} colors={greys} /></Slot>
                <Slot $ml={8} $mt={12}><Pixels rows={GREY_RIGHT} colors={greys} /></Slot>
                <Slot $ml={7} />
              </HeadCell>
              <HeadCell>
                <Text $size={13} $mt={16} $ls={-0.1}>Vaade</Text>
                <Spacer />
                <Slot $mt={11}><Note kind="left" /></Slot>
                <Slot $ml={10} $mt={11}><Note kind="center" /></Slot>
                <Slot $ml={10} $mt={11}><Note kind="right" /></Slot>
                <Slot $ml={10} $mt={11}><Note kind="full" /></Slot>
                <Slot $ml={10} $mt={11}>
                  <svg width="17" height="16"><path d="M1 8 8 5l8 2.500v4l-7 4.500-8-4z" fill="#b4b4b4" stroke="#222" /><path d="M1 8l8 3.500L16 7.500M9 11.500V16" fill="none" stroke="#444" /><path d="M9 11.500 16 7.500v4L9 16z" fill="#707070" /><path d="M7 5.500 9 1.500l5-1c2 0 2 2 1 2l-3 4.500z" fill="#fff" stroke="#333" /><path d="M3.500 7.500h3" stroke="#00cc00" strokeWidth="1.500" /><path d="M7 9h2" stroke="#f00" strokeWidth="1.800" /></svg>
                </Slot>
                <Slot $ml={5} />
              </HeadCell>
              <Pane $pad="2px 1px 1px 2px">
                <TreeArea>
                  {ROWS.map((r, i) => <TreeRow key={i} r={r} />)}
                </TreeArea>
                <ScrollBar $w={18} $edge="#aca899">
                  <ScrollButton><Chevron up /></ScrollButton>
                  <Thumb><svg width="7" height="8"><path d="M0 .500h6M0 2.500h6M0 4.500h6M0 6.500h6" stroke="#eef4fe" /><path d="M1 1.500h6M1 3.500h6M1 5.500h6M1 7.500h6" stroke="#8cb0f8" /></svg></Thumb>
                  <Spacer />
                  <ScrollButton><Chevron /></ScrollButton>
                </ScrollBar>
              </Pane>
              <Pane $pad="1px">
                <View>
                  <Line $h={20}><Mark>HS</Mark> \<Mark>SR</Mark> \<Mark $small>MÄEND</Mark></Line>
                  <Line $bold $ls={0.22}>pinnasemehhaanika</Line>
                  <Line $ls={-0.17}>● maaõue pealiskihi ehitusomadusi käsitlev inseneriharu</Line>
                  <Line $ls={-0.18}><i>en</i>: soil mechanics</Line>
                  <Line $ls={-0.02}><i>de</i>: Bodenmechanik <i>f</i></Line>
                  <Line><i>fi</i>: maaperän mekaniikka</Line>
                  <Line $ls={0.42}><i>ru</i>: механика почв <i>ж</i></Line>
                </View>
              </Pane>
            </Frame>
            <Text $size={15} $bold $color="#800000" $ml={52} $mt={4} $ls={0.48}>[T E S T B A A S]</Text>
          </PageBody>
          <ScrollBar $w={18} $ml={10}>
            <ScrollButton $off><Chevron up color="#c9c7ba" /></ScrollButton>
            <Spacer />
            <ScrollButton $off><Chevron color="#c9c7ba" /></ScrollButton>
          </ScrollBar>
        </Page>

        <StatusBar>
          <Text $mt={3} $ls={-0.26}>Esimene: leiti 1 artikkel [XML]; (0m, 0s)</Text>
          <Spacer />
          <StatusSep />
          {[0, 1, 2, 3, 4, 5].map((i) => <StatusSep key={i} $ml={22} />)}
          <StatusGroup $w={200}>
            <Slot $ml={4}><svg width="16" height="16"><path d="M1.500 9l4 5L14 1.500" fill="none" stroke="#4dbb3c" strokeWidth="2.800" /></svg></Slot>
            <Text $ml={3} $mt={2} $ls={-0.13}>Usaldusväärsed kohad</Text>
          </StatusGroup>
          <StatusSep />
          <Slot $ml={9}><svg width="16" height="15"><path d="M0 6 5 2v2.500c4-1 7 0 8 3M5 7v3z" fill="#bbb" stroke="#999" /><rect x="7" y="8" width="8" height="6" fill="#999" stroke="#777" /><path d="M9 8V5.500c0-2 4-2 4 0V8" fill="none" stroke="#888" strokeWidth="1.300" /></svg></Slot>
          <Slot $ml={6} $mt={1}><svg width="6" height="3"><path d="M0 0h6L3 3z" /></svg></Slot>
          <StatusSep $ml={6} />
          <Slot $ml={9}><svg width="13" height="13"><path d="M8 8l4.500 4.500" stroke="#555" strokeWidth="2.400" /><circle cx="5.500" cy="5.500" r="4.600" fill="#bfe0fa" stroke="#3878c0" strokeWidth="1.300" /><path d="M3 5.500h5M5.500 3v5" stroke="#1450a8" strokeWidth="1.600" /></svg></Slot>
          <Text $ml={2} $mt={2}>100%</Text>
          <Slot $ml={15} $mt={1}><svg width="6" height="3"><path d="M0 0h6L3 3z" /></svg></Slot>
          <Slot $ml={11} $mt={12}>
            <svg width="11" height="11"><path d="M8 0h2v2H8zM4 4h2v2H4zM8 4h2v2H8zM0 8h2v2H0zM4 8h2v2H4zM8 8h2v2H8z" fill="#b8b4a2" /></svg>
          </Slot>
        </StatusBar>
      </Window>

      <TaskBar>
        <Start>
          <svg width="19" height="18" viewBox="0 0 19 18"><path d="M3 2.500Q6.500.500 9 2.500L7.800 8.500Q5 6.500 1.500 8.300z" fill="#f0582a" /><path d="M10 3q4 2.500 8 .3L16.500 9.500q-4 2-7.500-.6z" fill="#7cc23a" /><path d="M1.300 9.500q3.500-1.800 6.200.2L6 15.700Q3.500 13.700 0 15.500z" fill="#4a92f0" /><path d="M8.800 10.200q4 2.300 7.500.500l-1.500 6q-4 2-7.500-.5z" fill="#fbc823" /></svg>
          <StartText>start</StartText>
        </Start>
        <Quick>
          <IeLogo /><Firefox /><Chrome />
          <svg width="16" height="16"><rect x="1.500" y="2.500" width="12" height="12" rx="1" fill="#e6f1fc" stroke="#4a90d0" /><path d="M11 5C7 3 4 6 5 9s5 4 7 1M7 8h5l3-4" fill="none" stroke="#2478c8" strokeWidth="1.800" /><path d="M11 1l4 2-3 3z" fill="#fff" /></svg>
          <svg width="16" height="16"><path d="M5 9h7l-1 6H6z" fill="#c8c8c8" stroke="#777" /><path d="M7 9 4 2" stroke="#e6453a" strokeWidth="1.700" /><path d="M8.500 9V1" stroke="#f0b030" strokeWidth="1.700" /><path d="M10 9l3-7" stroke="#64a848" strokeWidth="1.700" /></svg>
        </Quick>
        <Task><Firefox /><Text $ml={5} $ls={-0.1}>Gmail: e-post Goo...</Text></Task>
        <Task $active><IeLogo /><Text $ml={4}>[GEO] [T E S T B ...</Text></Task>
        <Task><WordDoc /><Text $ml={4}>EKRK tegevused ...</Text></Task>
        <Task><Floppy red /><Text $ml={6}>Total Commander...</Text></Task>
        <Task><WordDoc /><Text $ml={4}>Aastaaruanne_Se...</Text></Task>
        <Slot $ml={8} $mt={7}><InputLanguage>ET</InputLanguage></Slot>
        <Slot $ml={7} $mt={8}><svg width="14" height="15"><path d="M1.500 1.500h11v11h-3v2l-2-2h-6z" fill="#fff" stroke="#000" /><path d="M4.500 5c0-3 5-3 5 0 0 1.500-2.500 1.500-2.500 3.500M7 9.500v2" stroke="#101070" strokeWidth="1.700" fill="none" /></svg></Slot>
        <Spacer />
        <Tray>
          <svg width="16" height="16"><path d="M8 1c2 1.500 4 1.500 6 1.500C14 9 12 13 8 15 4 13 2 9 2 2.500 4 2.500 6 2.500 8 1z" fill="#ffe23c" stroke="#8a6d10" /><path d="M8 4v5M8 10.500v2" stroke="#111" strokeWidth="2" /></svg>
          <svg width="16" height="16"><rect x=".5" y=".5" width="15" height="15" fill="#e8752a" stroke="#ffc79a" /><path d="M8 2c3 2-3 3 0 6M4 9h7c2 0 1 2 0 2M4 11.500h6M3 13.500h9" stroke="#fff" fill="none" /></svg>
          <svg width="16" height="16"><path d="M1 3q7-3 14 0l-1 2Q8 3 2 5zM3 7q5-2 10 0l-1 2.500Q8 8 4 9.500zM5.500 11q2.500-1 5 0L8 15z" fill="#dce8f4" stroke="#6f93bd" strokeWidth=".6" /></svg>
          <svg width="16" height="16"><circle cx="8" cy="8" r="6.700" fill="#e8f3fc" stroke="#7aa6d0" /><path d="M2 7c3-2 4 1 6 0s4-1 6 0M2.500 10.500c3-2 4 1 6 0s3-1 5 0" stroke="#2b6fb5" fill="none" strokeWidth="1.700" /></svg>
          <svg width="16" height="16"><circle cx="7" cy="7" r="5.800" fill="#8a9299" stroke="#dde4ea" /><circle cx="6" cy="7" r="2.500" fill="#30363c" /><path d="M12 14c2-1 3-3 2.500-5" stroke="#dfeefa" fill="none" /></svg>
          <svg width="16" height="16"><path d="M4 7l7-2 3 6-7 4z" fill="#bcc4c0" stroke="#4c5850" /><path d="M2 1l6 1-1.500 2L10 8 7 9 4 5 2.500 6z" fill="#42b62c" stroke="#1f7514" strokeWidth=".7" /></svg>
          <svg width="16" height="16"><path d="M0 7.500 7 6.500 10 1l2 3 1 1.500 3 .5-2.500 1.500C13.500 12 11 12 10 15L8 12 3 10.500l3-1.500z" fill="#33a850" /></svg>
          <svg width="16" height="16"><path d="M1 5h3l5-4v14l-5-4H1z" fill="#888" stroke="#333" /><path d="M6 3.500v9" stroke="#ddd" /><path d="M11 3c3 2 3 8 0 10M13.500 1.500c3 3 2.500 10 0 13" fill="none" stroke="#d42a10" strokeWidth="1.500" /></svg>
          <svg width="16" height="16"><rect x="1.500" y="1.500" width="13" height="13" fill="#fff" stroke="#666677" /><path d="M3 5h9M3 8h9M3 11h6" stroke="#9aacc4" /><path d="M14 2 8 11l-1 3 3-2 6-8z" fill="#f0c030" stroke="#555" strokeWidth=".7" /><path d="M14 1l2 2" stroke="#e03030" strokeWidth="2" /></svg>
          <svg width="16" height="16"><rect x="7" y="2" width="9" height="12" fill="#76b900" /><path d="M0 8q6-7 12 0-6 6-12 0z" fill="#fff" stroke="#76b900" strokeWidth="1.400" /><circle cx="6.500" cy="8" r="2" fill="#4a8800" /></svg>
          <Text $ml={6} $ls={-0.2}>16:22</Text>
        </Tray>
      </TaskBar>
    </Desktop>
  );
}
